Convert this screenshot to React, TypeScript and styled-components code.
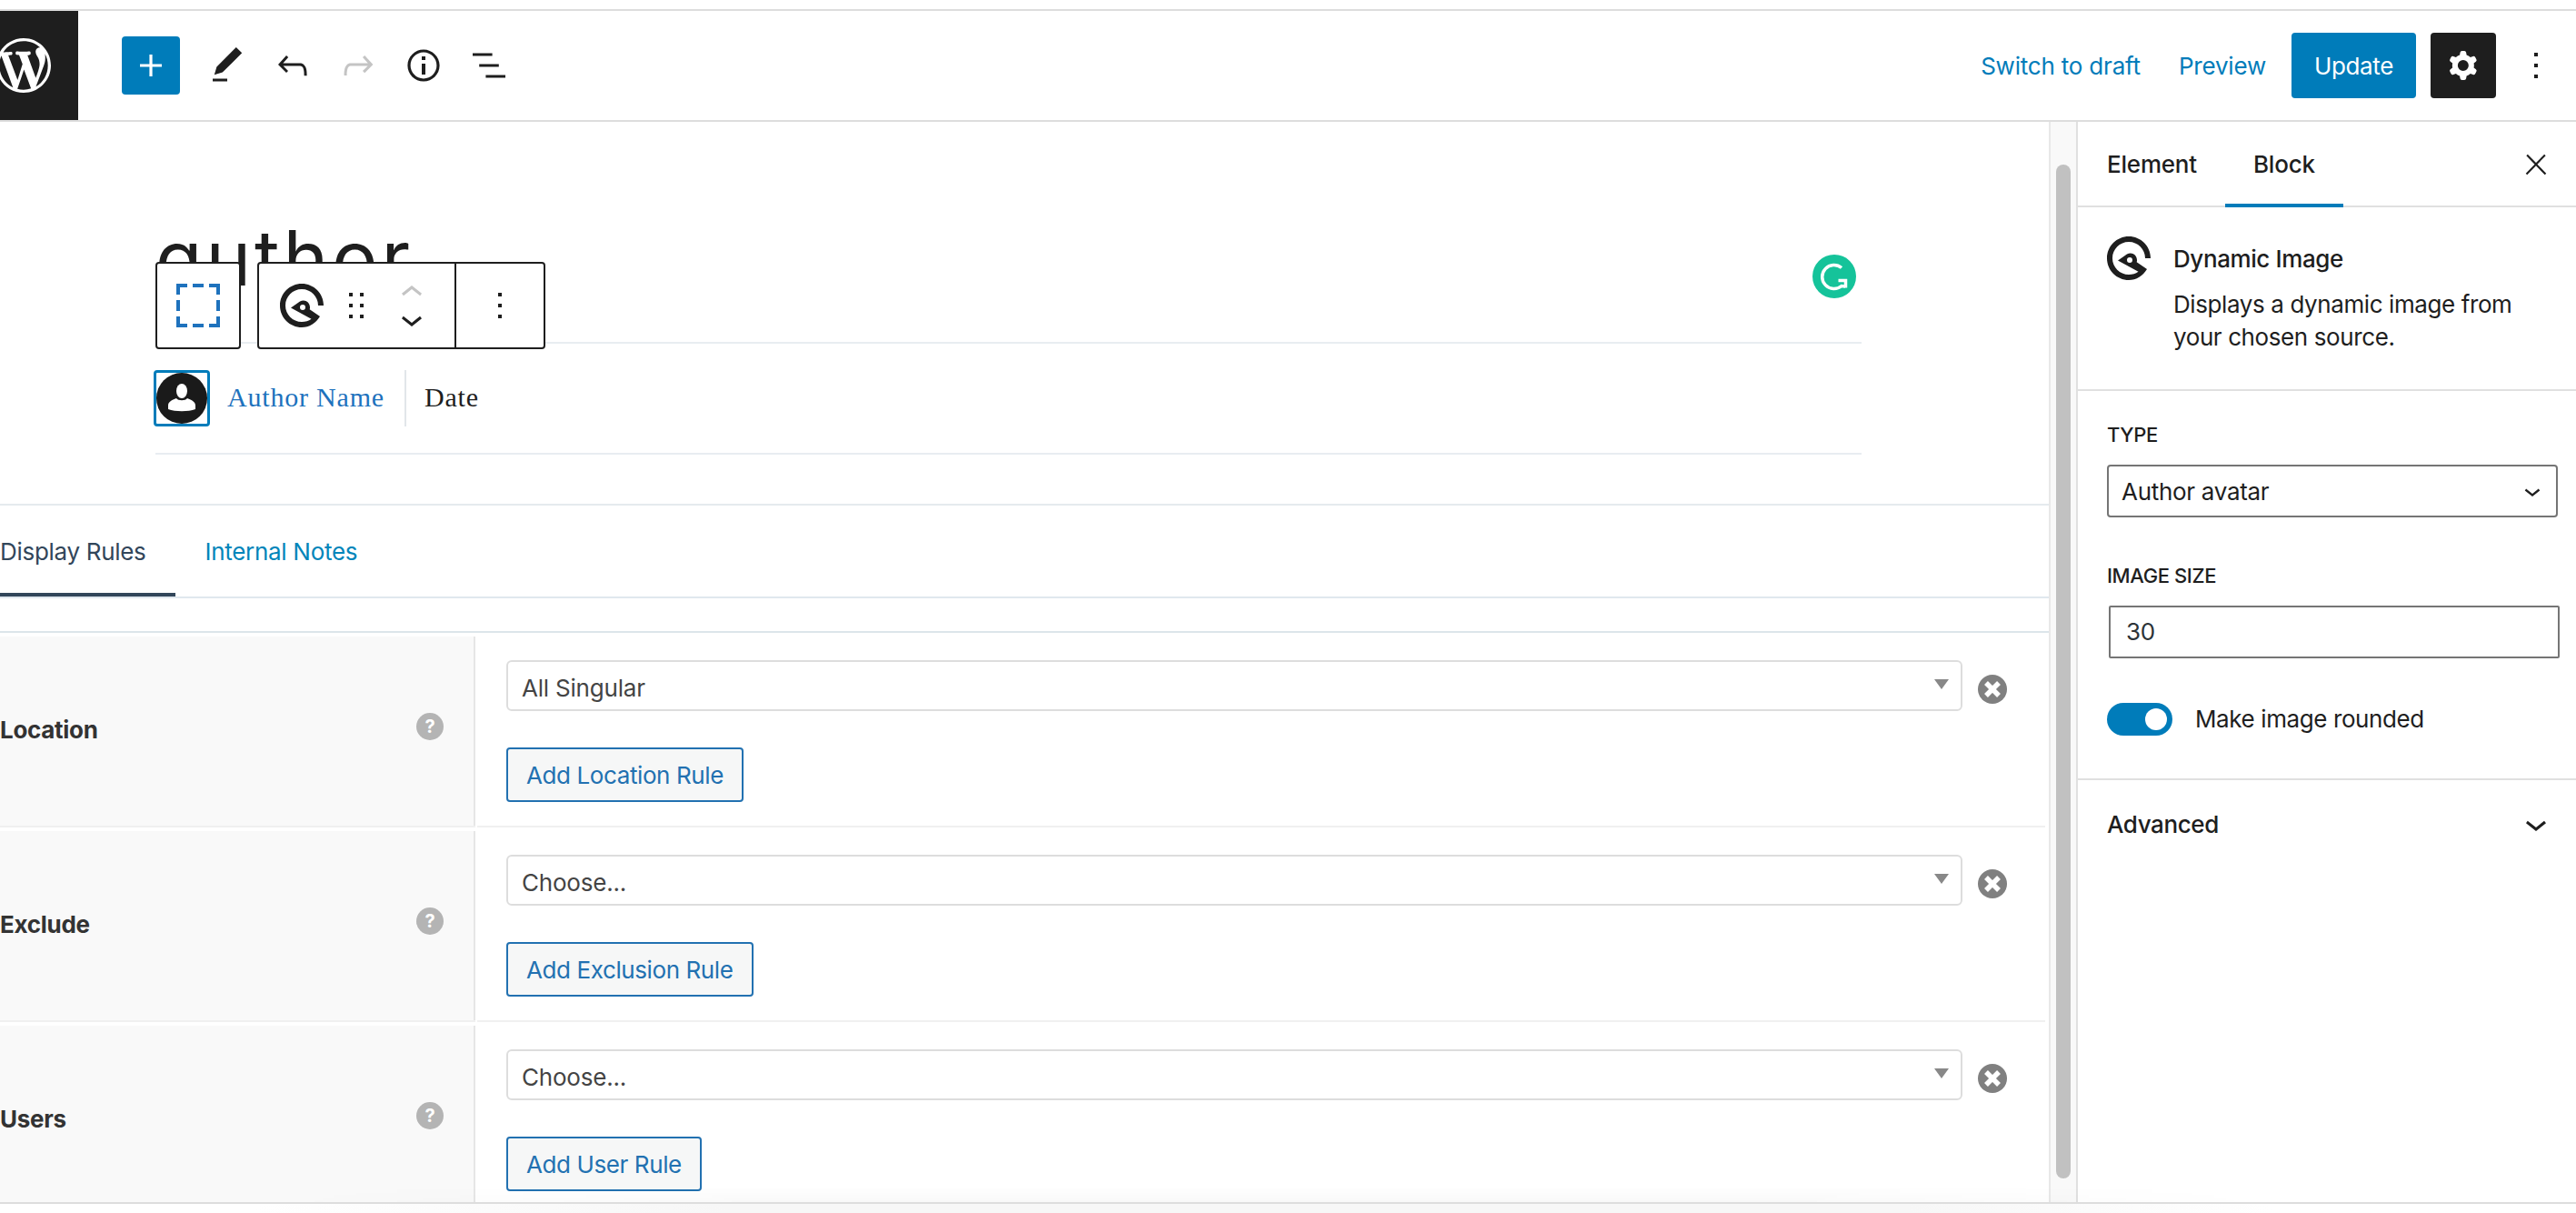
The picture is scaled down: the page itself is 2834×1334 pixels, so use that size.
import styled, { createGlobalStyle } from 'styled-components';

const GlobalStyle = createGlobalStyle`
	html, body {
		margin: 0;
		padding: 0;
		background: #fff;
		overflow: hidden;
	}

	* {
		box-sizing: border-box;
	}

	body {
		font-family: Inter, 'Liberation Sans', sans-serif;
		font-size: 26px;
		letter-spacing: -0.4px;
		color: #1e1e1e;
	}
`;

const Glyph = ({ d, size = 48, color = 'currentColor' }: { d: string; size?: number; color?: string }) => (
	<svg width={size} height={size} viewBox='0 0 24 24' fill={color} fillRule='evenodd'>
		<path d={d} />
	</svg>
);

const icons = {
	plus: 'M18 11.2h-5.2V6h-1.6v5.2H6v1.6h5.2V18h1.6v-5.2H18z',
	pen: 'M20.1 5.1L16.9 2 6.2 12.7l-1.3 4.4 4.5-1.3L20.1 5.1zM4 20.8h8v-1.5H4v1.5z',
	undo: 'M18.3 11.7c-.6-.6-1.4-.9-2.3-.9H6.7l2.9-3.3-1.1-1-4.5 5L8.5 16l1-1-2.7-2.7H16c.5 0 .9.2 1.3.5 1 1 1 3.4 1 4.5v.3h1.5v-.2c0-1.5 0-4.3-1.5-5.7z',
	redo: 'M15.6 6.5l-1.1 1 2.9 3.3H8c-.9 0-1.7.3-2.3.9-1.4 1.5-1.4 4.2-1.4 5.6v.2h1.5v-.3c0-1.1 0-3.5 1-4.5.3-.3.7-.5 1.3-.5h9.2L14.5 15l1.1 1.1 4.6-4.6-4.6-5z',
	info: 'M12 3.2c-4.8 0-8.8 3.9-8.8 8.8 0 4.8 3.9 8.8 8.8 8.8 4.8 0 8.8-3.9 8.8-8.8 0-4.8-4-8.8-8.8-8.8zm0 16c-4 0-7.2-3.3-7.2-7.2C4.8 8 8 4.8 12 4.8s7.2 3.3 7.2 7.2c0 4-3.2 7.2-7.2 7.2zM11 17h2v-6h-2v6zm0-8h2V7h-2v2z',
	list: 'M13.8 5.2H3v1.5h10.8V5.2zm-3.6 12v1.5H21v-1.5H10.2zm7.2-6H6.6v1.5h10.8v-1.5z',
	cog: 'M10.289 4.836A1 1 0 0111.275 4h1.306a1 1 0 01.987.836l.244 1.466c.787.26 1.503.679 2.108 1.218l1.393-.522a1 1 0 011.216.437l.653 1.13a1 1 0 01-.23 1.273l-1.148.944a6.025 6.025 0 010 2.435l1.149.946a1 1 0 01.23 1.272l-.653 1.13a1 1 0 01-1.216.437l-1.394-.522c-.605.54-1.32.958-2.108 1.218l-.244 1.466a1 1 0 01-.987.836h-1.306a1 1 0 01-.986-.836l-.244-1.466a5.995 5.995 0 01-2.108-1.218l-1.394.522a1 1 0 01-1.217-.436l-.653-1.131a1 1 0 01.23-1.272l1.149-.946a6.026 6.026 0 010-2.435l-1.148-.944a1 1 0 01-.23-1.272l.653-1.131a1 1 0 011.217-.437l1.393.522a5.994 5.994 0 012.108-1.218l.244-1.466zM14.929 12a3 3 0 11-6 0 3 3 0 016 0z',
	more: 'M13 19h-2v-2h2v2zm0-6h-2v-2h2v2zm0-6h-2V5h2v2z',
	close: 'M13 11.8l6.1-6.3-1-1-6.1 6.2-6.1-6.2-1 1 6.1 6.3-6.5 6.7 1 1 6.5-6.6 6.5 6.6 1-1z',
	drag: 'M8 7h2V5H8v2zm0 6h2v-2H8v2zm0 6h2v-2H8v2zm6-14v2h2V5h-2zm0 8h2v-2h-2v2zm0 6h2v-2h-2v2z',
	chevronDown: 'M17.5 11.6L12 16l-5.5-4.4.9-1.2L12 14l4.5-3.6 1 1.2z',
	chevronUp: 'M6.5 12.4L12 8l5.5 4.4-.9 1.2L12 10l-4.5 3.6-1-1.2z',
};

const WpLogo = () => (
	<WpSvg width='60' height='60' viewBox='0 0 20 20' fill='#fff'>
		<path d='M20 10c0-5.51-4.49-10-10-10C4.48 0 0 4.49 0 10c0 5.52 4.48 10 10 10 5.51 0 10-4.48 10-10zM7.78 15.37L4.37 6.22c.55-.02 1.17-.08 1.17-.08.5-.06.44-1.13-.06-1.11 0 0-1.45.11-2.37.11-.18 0-.37 0-.58-.01C4.12 2.69 6.87 1.11 10 1.11c2.33 0 4.45.87 6.05 2.34-.68-.11-1.65.39-1.65 1.58 0 .74.45 1.36.9 2.1.35.61.55 1.36.55 2.46 0 1.49-1.4 5-1.4 5l-3.03-8.37c.54-.02.82-.17.82-.17.5-.05.44-1.25-.06-1.22 0 0-1.44.12-2.38.12-.87 0-2.33-.12-2.33-.12-.5-.03-.56 1.2-.06 1.22l.92.08 1.26 3.41zM17.41 10c.24-.64.74-1.87.43-4.25.7 1.29 1.05 2.71 1.05 4.25 0 3.29-1.73 6.24-4.4 7.78.97-2.59 1.94-5.2 2.92-7.78zM6.1 18.09C3.12 16.65 1.11 13.53 1.11 10c0-1.3.23-2.48.72-3.59C3.25 10.3 4.67 14.2 6.1 18.09zm4.03-6.63l2.58 6.98c-.86.29-1.76.45-2.71.45-.79 0-1.57-.11-2.29-.33.81-2.38 1.62-4.74 2.42-7.1z' />
	</WpSvg>
);

// ring with a wedge, logo of the dynamic image block
const DynamicIcon = () => (
	<BlockSvg width='48' height='48' viewBox='0 0 48 48' fill='#1e1e1e' fillRule='evenodd'>
		<path d='M24 0C37.25 0 48 10.75 48 24H42C42 14.06 33.94 6 24 6S6 14.06 6 24s8.06 18 18 18c4 0 7.5-1.2 10.5-3.3L12 26.5 22 19.5C27 16.5 33 20 33 26c0 .8-.1 1.5-.3 2.2L44 36C39.6 43.3 32.3 48 24 48 10.75 48 0 37.25 0 24S10.75 0 24 0ZM22 26a3 3 0 1 0 6 0a3 3 0 1 0-6 0Z' />
	</BlockSvg>
);

const DashedSquare = () => (
	<svg width='48' height='48' viewBox='0 0 48 48' fill='none' stroke='#1e72bd' strokeWidth='4'>
		<path d='M12 2H2V12M36 2H46V12M12 46H2V36M36 46H46V36M18 2H30M18 46H30M2 18V30M46 18V30' />
	</svg>
);

const rules = [
	{ label: 'Location', value: 'All Singular', action: 'Add Location Rule' },
	{ label: 'Exclude', value: 'Choose...', action: 'Add Exclusion Rule' },
	{ label: 'Users', value: 'Choose...', action: 'Add User Rule' },
];

function App() {
	return (
		<>
			<GlobalStyle />
			<Page>
				<Header>
					<LogoBox>
						<WpLogo />
					</LogoBox>
					<InserterButton>
						<Glyph d={icons.plus} />
					</InserterButton>
					<ToolGroup>
						<ToolIcon><Glyph d={icons.pen} /></ToolIcon>
						<ToolIcon><Glyph d={icons.undo} /></ToolIcon>
						<ToolIcon $muted><Glyph d={icons.redo} /></ToolIcon>
						<ToolIcon><Glyph d={icons.info} /></ToolIcon>
						<ToolIcon><Glyph d={icons.list} /></ToolIcon>
					</ToolGroup>
					<HeaderActions>
						<TextLink>Switch to draft</TextLink>
						<TextLink>Preview</TextLink>
						<UpdateButton>Update</UpdateButton>
						<SettingsButton>
							<Glyph d={icons.cog} />
						</SettingsButton>
						<ToolIcon><Glyph d={icons.more} /></ToolIcon>
					</HeaderActions>
				</Header>
				<Body>
					<Editor>
						<Canvas>
							<PostTitle>author</PostTitle>
							<BlockToolbar>
								<ToolbarGroup>
									<SquareSlot><DashedSquare /></SquareSlot>
								</ToolbarGroup>
								<ToolbarGroup>
									<DynamicSlot><DynamicIcon /></DynamicSlot>
									<DragSlot><Glyph d={icons.drag} /></DragSlot>
									<MoverSlot>
										<MoverIcon $muted><Glyph d={icons.chevronUp} /></MoverIcon>
										<MoverIcon><Glyph d={icons.chevronDown} /></MoverIcon>
									</MoverSlot>
									<MoreSlot><Glyph d={icons.more} /></MoreSlot>
								</ToolbarGroup>
							</BlockToolbar>
							<GrammarlyBadge>
								<svg width='48' height='48' viewBox='0 0 48 48' fill='none' stroke='#fff' strokeWidth='3.5'>
									<path d='M32 14.5A13 13 0 1 0 32 34.5L36 35' />
									<path d='M28.5 28.5H36.5V36.5' />
								</svg>
							</GrammarlyBadge>
							<MetaRow>
								<AvatarFrame>
									<AvatarCircle>
										<svg width='30' height='32' viewBox='0 0 30 32' fill='#fff'>
											<ellipse cx='15' cy='8' rx='6' ry='8' />
											<path d='M0 28V24C0 20 4 18 9 16c2 3 10 3 12 0 5 2 9 4 9 8v4c-8 3-22 3-30 0Z' />
										</svg>
									</AvatarCircle>
								</AvatarFrame>
								<AuthorName>Author Name</AuthorName>
								<MetaDate>Date</MetaDate>
							</MetaRow>
						</Canvas>
						<TabsBar>
							<RuleTab $active>Display Rules</RuleTab>
							<RuleTab>Internal Notes</RuleTab>
						</TabsBar>
						<RuleList>
							{rules.map((rule) => (
								<RuleRow key={rule.label}>
									<RuleLabel>
										<RuleName>{rule.label}</RuleName>
										<HelpDot>?</HelpDot>
									</RuleLabel>
									<RuleBody>
										<SelectLine>
											<RuleSelect>
												{rule.value}
												<SelectCaret />
											</RuleSelect>
											<RemoveDot>
												<svg width='32' height='32' viewBox='0 0 32 32' fill='none' stroke='#fff' strokeWidth='5.5'>
													<path d='M9 9 23 23M23 9 9 23' />
												</svg>
											</RemoveDot>
										</SelectLine>
										<AddRuleButton>{rule.action}</AddRuleButton>
									</RuleBody>
								</RuleRow>
							))}
						</RuleList>
					</Editor>
					<ScrollTrack>
						<ScrollThumb />
					</ScrollTrack>
					<Sidebar>
						<SidebarTabs>
							<SidebarTab>Element</SidebarTab>
							<SidebarTab $active>Block</SidebarTab>
							<CloseIcon><Glyph d={icons.close} size={36} /></CloseIcon>
						</SidebarTabs>
						<BlockCard>
							<DynamicIcon />
							<BlockCardText>
								<BlockTitle>Dynamic Image</BlockTitle>
								<BlockDescription>Displays a dynamic image from your chosen source.</BlockDescription>
							</BlockCardText>
						</BlockCard>
						<SettingsPanel>
							<FieldLabel>Type</FieldLabel>
							<TypeSelect>
								Author avatar
								<Glyph d={icons.chevronDown} size={36} />
							</TypeSelect>
							<FieldLabel>Image size</FieldLabel>
							<SizeInput>30</SizeInput>
							<ToggleRow>
								<ToggleTrack>
									<ToggleKnob />
								</ToggleTrack>
								<ToggleLabel>Make image rounded</ToggleLabel>
							</ToggleRow>
						</SettingsPanel>
						<AdvancedRow>
							Advanced
							<Glyph d={icons.chevronDown} />
						</AdvancedRow>
					</Sidebar>
				</Body>
				<BottomStrip />
			</Page>
		</>
	);
}

const WpSvg = styled.svg`
	flex: none;
`;

const BlockSvg = styled.svg`
	flex: none;
`;

const Page = styled.div`
	width: 2834px;
	height: 1334px;
	overflow: hidden;
	display: flex;
	flex-direction: column;
	padding-top: 10px;
	background: #fff;
`;

const Header = styled.header`
	flex: 0 0 124px;
	display: flex;
	align-items: center;
	border-top: 2px solid #ddd;
	border-bottom: 2px solid #ddd;
`;

const LogoBox = styled.div`
	width: 86px;
	height: 120px;
	flex: none;
	background: #1e1e1e;
	display: flex;
	align-items: center;
	justify-content: flex-end;
	padding-right: 30px;
`;

const InserterButton = styled.div`
	width: 64px;
	height: 64px;
	margin-left: 48px;
	border-radius: 4px;
	background: #007cba;
	color: #fff;
	display: flex;
	align-items: center;
	justify-content: center;
`;

const ToolGroup = styled.div`
	display: flex;
	gap: 24px;
	margin-left: 28px;
`;

const ToolIcon = styled.span<{ $muted?: boolean }>`
	display: flex;
	width: 48px;
	height: 48px;
	color: ${(p) => (p.$muted ? '#c4c4c4' : '#1e1e1e')};
`;

const HeaderActions = styled.div`
	margin-left: auto;
	padding-right: 20px;
	display: flex;
	align-items: center;
`;

const TextLink = styled.span`
	color: #007cba;
	margin-right: 42px;
	padding-top: 1px;
	letter-spacing: -0.2px;

	& + & {
		margin-right: 28px;
	}
`;

const UpdateButton = styled.span`
	width: 137px;
	height: 72px;
	border-radius: 4px;
	background: #007cba;
	color: #fff;
	display: flex;
	align-items: center;
	justify-content: center;
`;

const SettingsButton = styled.span`
	width: 72px;
	height: 72px;
	margin: 0 20px 0 16px;
	border-radius: 4px;
	background: #1e1e1e;
	color: #fff;
	display: flex;
	align-items: center;
	justify-content: center;
`;

const Body = styled.div`
	flex: 0 0 1190px;
	min-height: 0;
	display: flex;
	border-bottom: 2px solid #ddd;
`;

const Editor = styled.main`
	width: 2254px;
	flex: none;
	overflow: hidden;
	display: flex;
	flex-direction: column;
`;

const Canvas = styled.section`
	position: relative;
	flex: 0 0 422px;
	padding: 108px 206px 0 171px;
	border-bottom: 2px solid #e5eaee;
`;

const PostTitle = styled.h1`
	margin: 0;
	height: 136px;
	font-size: 84px;
	line-height: 84px;
	font-weight: 400;
	letter-spacing: 4px;
	font-feature-settings: 'cv11';
	color: #1e1e1e;
	border-bottom: 2px solid #e8edf1;
`;

const BlockToolbar = styled.div`
	position: absolute;
	left: 171px;
	top: 154px;
	display: flex;
	gap: 18px;
`;

const ToolbarGroup = styled.div`
	height: 96px;
	display: flex;
	align-items: center;
	border: 2px solid #1e1e1e;
	border-radius: 4px;
	background: #fff;
`;

const SquareSlot = styled.div`
	width: 90px;
	display: flex;
	justify-content: center;
`;

const DynamicSlot = styled.div`
	display: flex;
	margin-left: 23px;
`;

const DragSlot = styled.div`
	display: flex;
	margin-left: 12px;
`;

const MoverSlot = styled.div`
	width: 48px;
	height: 92px;
	margin-left: 13px;
	margin-right: 23px;
	display: flex;
	flex-direction: column;
	align-items: center;
	justify-content: center;
`;

const MoverIcon = styled.span<{ $muted?: boolean }>`
	display: flex;
	height: 29px;
	align-items: center;
	color: ${(p) => (p.$muted ? '#c4c4c4' : '#1e1e1e')};
`;

const MoreSlot = styled.div`
	width: 98px;
	height: 92px;
	border-left: 2px solid #1e1e1e;
	display: flex;
	align-items: center;
	justify-content: center;
`;

const GrammarlyBadge = styled.div`
	position: absolute;
	left: 1994px;
	top: 146px;
	width: 48px;
	height: 48px;
	border-radius: 50%;
	background: #15c39a;
	display: flex;
`;

const MetaRow = styled.div`
	height: 122px;
	padding-top: 29px;
	display: flex;
	align-items: flex-start;
	border-bottom: 2px solid #e8edf1;
	font-family: 'Liberation Serif', serif;
	font-size: 30px;
	letter-spacing: 0.8px;
`;

const AvatarFrame = styled.div`
	width: 62px;
	height: 62px;
	margin-left: -2px;
	border: 3px solid #007cba;
	border-radius: 4px;
	display: flex;
	align-items: center;
	justify-content: center;
`;

const AvatarCircle = styled.div`
	width: 56px;
	height: 56px;
	border-radius: 50%;
	background: #1a1a1a;
	display: flex;
	align-items: center;
	justify-content: center;
`;

const AuthorName = styled.span`
	margin-left: 19px;
	padding: 7px 22px 9px 0;
	color: #1e72bd;
	line-height: 46px;
	border-right: 2px solid #e2e6ea;
`;

const MetaDate = styled.span`
	margin-left: 20px;
	padding: 7px 0;
	line-height: 46px;
`;

const TabsBar = styled.div`
	flex: 0 0 102px;
	display: flex;
	gap: 33px;
	border-bottom: 2px solid #e0e8ee;
`;

const RuleTab = styled.div<{ $active?: boolean }>`
	height: 100px;
	padding: 35px 32px 0 0;
	letter-spacing: -0.3px;
	color: ${(p) => (p.$active ? '#32465a' : '#0085ba')};
	line-height: 32px;
	border-bottom: 4px solid ${(p) => (p.$active ? '#32465a' : 'transparent')};
`;

const RuleList = styled.div`
	margin-top: 36px;
	border-top: 2px solid #dce5ea;
	padding-top: 4px;
`;

const RuleRow = styled.div`
	display: grid;
	grid-template-columns: 523px 1fr;
	column-gap: 2px;
	height: 208px;
	margin-bottom: 6px;
`;

const RuleLabel = styled.div`
	background: #f9f9f9;
	border-right: 2px solid #e6e6e6;
	box-shadow: 0 2px 0 #f0f0f0;
	padding: 0 33px 0 0;
	display: flex;
	align-items: center;
	justify-content: space-between;
`;

const RuleName = styled.span`
	font-weight: 700;
	letter-spacing: -0.3px;
	color: #333;
	margin-top: -3px;
`;

const HelpDot = styled.span`
	width: 30px;
	height: 30px;
	margin-top: -10px;
	border-radius: 50%;
	background: #b4b4b4;
	color: #fff;
	font-size: 20px;
	font-weight: 700;
	line-height: 30px;
	text-align: center;
`;

const RuleBody = styled.div`
	margin-right: 4px;
	padding: 26px 0 0 32px;
	box-shadow: 0 2px 0 #f0f0f0;
`;

const SelectLine = styled.div`
	display: flex;
	align-items: center;
	gap: 17px;
`;

const RuleSelect = styled.div`
	width: 1602px;
	height: 56px;
	padding: 4px 15px 0;
	border: 2px solid #ddd;
	border-radius: 6px;
	display: flex;
	align-items: center;
	justify-content: space-between;
	letter-spacing: -0.2px;
	color: #444;
`;

const SelectCaret = styled.i`
	width: 0;
	height: 0;
	margin-right: -2px;
	margin-top: -8px;
	border-left: 8px solid transparent;
	border-right: 8px solid transparent;
	border-top: 11px solid #888;
`;

const RemoveDot = styled.span`
	width: 32px;
	height: 32px;
	margin-top: 8px;
	border-radius: 50%;
	background: #808080;
	display: flex;
`;

const AddRuleButton = styled.button`
	display: block;
	height: 60px;
	margin-top: 40px;
	padding: 0 20px;
	border: 2px solid #2271b1;
	border-radius: 4px;
	background: #f6f7f7;
	color: #2271b1;
	font: inherit;
	letter-spacing: inherit;
`;

const ScrollTrack = styled.div`
	width: 30px;
	flex: none;
	padding: 47px 6px 0;
	background: #f9f9f9;
	border-left: 2px solid #e8e8e8;
`;

const ScrollThumb = styled.div`
	width: 16px;
	height: 1115px;
	border-radius: 8px;
	background: #c1c1c1;
`;

const Sidebar = styled.aside`
	flex: 1;
	border-left: 2px solid #e0e0e0;
`;

const SidebarTabs = styled.div`
	height: 94px;
	display: flex;
	align-items: stretch;
	padding-left: 32px;
	padding-top: 2px;
	border-bottom: 2px solid #e0e0e0;
	position: relative;
	letter-spacing: -0.2px;
`;

const SidebarTab = styled.div<{ $active?: boolean }>`
	display: flex;
	align-items: center;
	font-weight: 500;
	margin-bottom: -2px;
	padding: ${(p) => (p.$active ? '0 31px' : '0')};
	margin-left: ${(p) => (p.$active ? '31px' : '0')};
	border-bottom: 4px solid ${(p) => (p.$active ? '#007cba' : 'transparent')};
`;

const CloseIcon = styled.span`
	position: absolute;
	right: 26px;
	top: 29px;
	display: flex;
`;

const BlockCard = styled.div`
	height: 202px;
	display: flex;
	gap: 25px;
	padding: 32px 32px 0;
	border-bottom: 2px solid #e0e0e0;
`;

const BlockCardText = styled.div`
	flex: 1;
`;

const BlockTitle = styled.div`
	font-weight: 500;
	line-height: 32px;
	margin: 9px 0 16px;
`;

const BlockDescription = styled.div`
	line-height: 36px;
	max-width: 420px;
`;

const SettingsPanel = styled.div`
	height: 428px;
	padding: 36px 20px 0 32px;
	border-bottom: 2px solid #e0e0e0;
`;

const FieldLabel = styled.div`
	font-size: 22px;
	font-weight: 500;
	text-transform: uppercase;
	line-height: 24px;
	margin-bottom: 21px;
`;

const TypeSelect = styled.div`
	height: 58px;
	margin-bottom: 52px;
	padding: 0 8px 0 14px;
	border: 2px solid #757575;
	border-radius: 4px;
	letter-spacing: -0.3px;
	display: flex;
	align-items: center;
	justify-content: space-between;
`;

const SizeInput = styled.div`
	height: 58px;
	margin: 0 -2px 0 2px;
	padding: 0 17px 2px;
	border: 2px solid #757575;
	border-radius: 2px;
	display: flex;
	align-items: center;
	color: #2c3338;
`;

const ToggleRow = styled.div`
	display: flex;
	align-items: center;
	gap: 25px;
	margin-top: 49px;
`;

const ToggleLabel = styled.span`
	margin-top: -2px;
`;

const ToggleTrack = styled.div`
	width: 72px;
	height: 36px;
	padding: 6px;
	border-radius: 18px;
	background: #007cba;
	display: flex;
	justify-content: flex-end;
`;

const ToggleKnob = styled.div`
	width: 24px;
	height: 24px;
	border-radius: 50%;
	background: #fff;
`;

const AdvancedRow = styled.div`
	height: 96px;
	padding: 0 20px 0 32px;
	display: flex;
	align-items: center;
	justify-content: space-between;
	font-weight: 500;
`;

// soft page shadow that runs across the bottom edge
const BottomStrip = styled.div`
	position: relative;
	flex: 1;
	background: linear-gradient(90deg, #fff 280px, #f7f7f7 800px, #f7f7f7 2100px, #fff 2500px);

	&::before {
		content: '';
		position: absolute;
		left: 300px;
		right: 330px;
		bottom: calc(100% + 2px);
		height: 18px;
		background: linear-gradient(0deg, rgba(0, 0, 0, 0.025), rgba(0, 0, 0, 0));
		mask-image: linear-gradient(90deg, transparent, #000 25%, #000 75%, transparent);
	}
`;

export default App;
